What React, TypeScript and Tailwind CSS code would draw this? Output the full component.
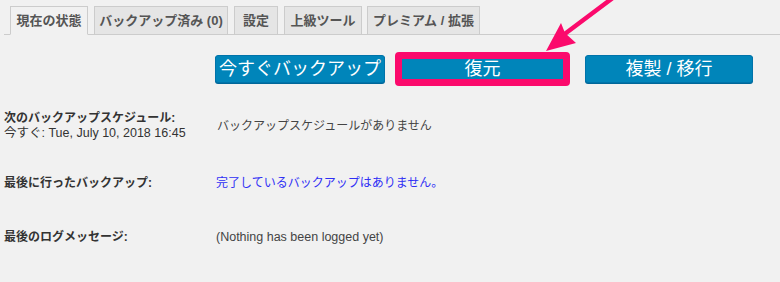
import React from "react";

const FONT = '"Liberation Sans", "Noto Sans CJK JP", Arial, sans-serif';

function Tab({ label, active, w, ml }: { label: string; active?: boolean; w: string; ml: string }) {
  return (
    <div
      className={`${w} ${ml} h-[29px] -mb-px flex items-center justify-center whitespace-nowrap border border-[#cccccc] text-[13px] font-bold text-[#555555] ${
        active ? "bg-[#f1f1f1] border-b-[#f1f1f1]" : "bg-[#e5e5e5]"
      }`}
    >
      {label}
    </div>
  );
}

export default function App() {
  return (
    <div className="relative w-[780px] h-[282px] bg-[#f1f1f1] overflow-hidden" style={{ fontFamily: FONT }}>
      {/* Tabs */}
      <div className="pt-[6px] ml-[4px]">
        <div className="flex items-end border-b border-[#cccccc] pl-[6px]">
          <Tab label="現在の状態" active w="w-[78px]" ml="ml-0" />
          <Tab label="バックアップ済み (0)" w="w-[134px]" ml="ml-[6px]" />
          <Tab label="設定" w="w-[44px]" ml="ml-[6px]" />
          <Tab label="上級ツール" w="w-[78px]" ml="ml-[6px]" />
          <Tab label="プレミアム / 拡張" w="w-[113px]" ml="ml-[5px]" />
        </div>
      </div>

      {/* Buttons */}
      <div className="flex items-center ml-[215px] mt-[17px]">
        <div className="w-[170px] h-[28px] rounded-[3px] bg-[#0085ba] border border-[#0073aa] shadow-[0_1px_0_#006799] flex items-center justify-center whitespace-nowrap text-white text-[18px] leading-none">
          今すぐバックアップ
        </div>
        <div className="ml-[10px] w-[175px] h-[34px] rounded-[4px] border-[7px] border-[#fb0a6c] bg-[#0085ba] flex items-center justify-center whitespace-nowrap text-white text-[18px] leading-none">
          復元
        </div>
        <div className="ml-[15px] w-[168px] h-[28px] rounded-[3px] bg-[#0085ba] border border-[#0073aa] shadow-[0_1px_0_#006799] flex items-center justify-center whitespace-nowrap text-white text-[18px] leading-none">
          複製 / 移行
        </div>
      </div>

      {/* Rows */}
      <div className="ml-[4px] mt-[25px] text-[#333333]">
        <div className="flex items-center">
          <div className="w-[213px] leading-[15px]">
            <div className="text-[12px] font-bold">次のバックアップスケジュール:</div>
            <div className="text-[12.5px]">今すぐ: Tue, July 10, 2018 16:45</div>
          </div>
          <div className="text-[12px] text-[#444444]">バックアップスケジュールがありません</div>
        </div>
        <div className="flex items-center mt-[35px] leading-[15px]">
          <div className="w-[212px] text-[12px] font-bold">最後に行ったバックアップ:</div>
          <div className="text-[12px] text-[#2f2ff5]">完了しているバックアップはありません。</div>
        </div>
        <div className="flex items-center mt-[39px] leading-[15px]">
          <div className="w-[212px] text-[12px] font-bold">最後のログメッセージ:</div>
          <div className="text-[12.5px] text-[#444444]">(Nothing has been logged yet)</div>
        </div>
      </div>

      {/* Arrow overlay */}
      <svg className="absolute left-0 top-0 pointer-events-none" width="780" height="282">
        <line x1="614" y1="-3" x2="562" y2="36" stroke="#fb0a6c" strokeWidth="4.5" strokeLinecap="round" />
        <polygon points="546,51 561,23 565,33 576,43" fill="#fb0a6c" />
      </svg>
    </div>
  );
}
